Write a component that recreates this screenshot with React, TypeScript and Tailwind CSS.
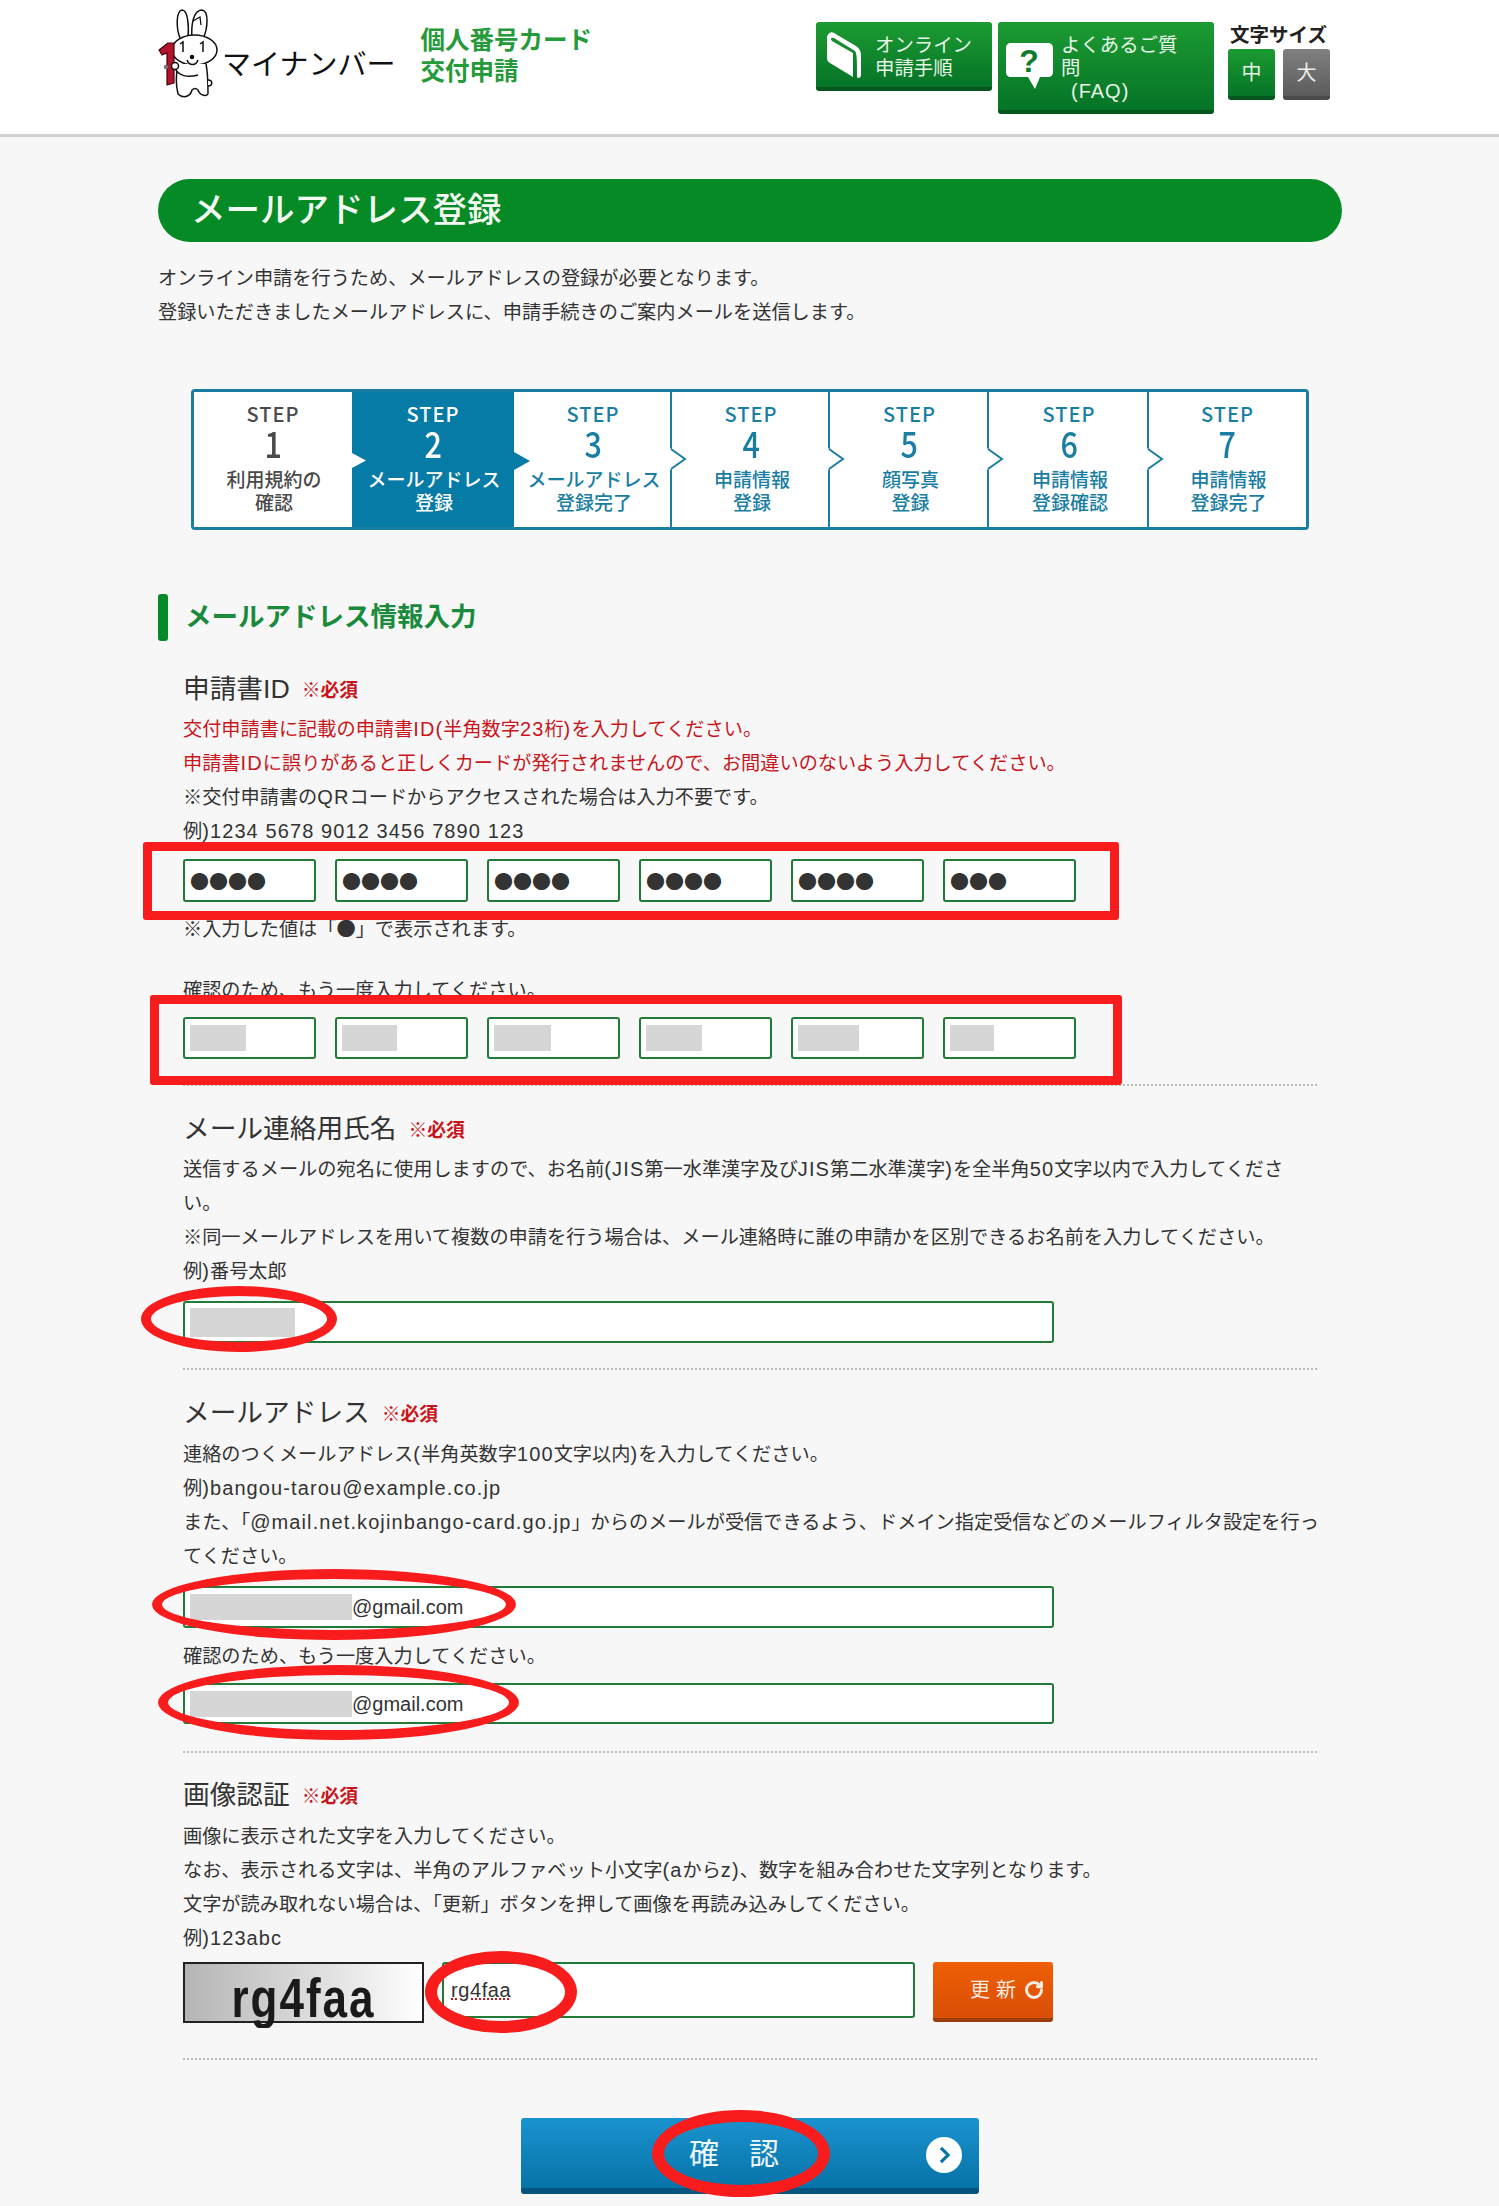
import { RotateCw } from "lucide-react";

const steps = [
  { num: "1", label: ["利用規約の", "確認"], tone: "first" },
  { num: "2", label: ["メールアドレス", "登録"], tone: "active" },
  { num: "3", label: ["メールアドレス", "登録完了"], tone: "next" },
  { num: "4", label: ["申請情報", "登録"], tone: "next" },
  { num: "5", label: ["顔写真", "登録"], tone: "next" },
  { num: "6", label: ["申請情報", "登録確認"], tone: "next" },
  { num: "7", label: ["申請情報", "登録完了"], tone: "next" },
];

function Rabbit() {
  return (
    <svg viewBox="0 0 64 92" className="h-[92px] w-[64px] shrink-0" fill="none" stroke="#111" strokeWidth="1.5">
      <path d="M22 30 C18 20 18 3 24 2 C30 2 31 18 30 30" fill="#fff" />
      <path d="M34 30 C33 18 35 2 44 2 C51 3 50 20 45 31" fill="#fff" />
      <path d="M35 13 L42 9 L43 17" strokeWidth="1.3" />
      <ellipse cx="36.5" cy="42" rx="22.5" ry="15" fill="#fff" />
      <path d="M20 56 C18 66 18 78 20 86 C24 90 32 90 34 82 C36 80 38 80 40 82 C42 88 50 89 50 85 C50 76 50 66 48 56" fill="#fff" />
      <path d="M17 60 C20 68 30 70 40 67" fill="#fff" />
      <path d="M50 72 C55 72 55 78 50 78" fill="#fff" />
      <path d="M22 36 L25 34 V44 M42 36 L45 34 V44" strokeWidth="1.5" />
      <circle cx="34" cy="49" r="1.5" fill="#111" />
      <path d="M29 52 C31 58 38 58 40 52" />
      <path d="M1 42 L10 35 H16 V75 L9 77 V45 L4 47 Z" fill="#b5122b" stroke="#3a0810" strokeWidth="1.2" strokeLinejoin="round" />
      <circle cx="17" cy="58" r="3.5" fill="#fff" />
      <circle cx="8" cy="59" r="2.2" fill="#777" stroke="none" />
    </svg>
  );
}

function BookIcon() {
  return (
    <svg viewBox="0 0 36 48" className="h-[48px] w-[36px]" fill="#fff">
      <path d="M1 7 C1 3 5 0 8 2 L30 15 C33 17 35 20 35 24 V44 C35 47 32 48 31 46 C31 30 31 22 29 20 L8 7 C5 6 4 8 6 10 L27 22 V46 L4 32 C2 31 1 29 1 27 Z" />
    </svg>
  );
}

function BubbleIcon() {
  return (
    <svg viewBox="0 0 47 46" className="h-[46px] w-[47px]">
      <path d="M5 0 H42 C45 0 47 2 47 5 V29 C47 32 45 34 42 34 H34 L29 46 L22 34 H5 C2 34 0 32 0 29 V5 C0 2 2 0 5 0 Z" fill="#fff" />
      <text x="23" y="29" textAnchor="middle" fontSize="32" fontWeight="700" fill="#0a7c2c" fontFamily="Liberation Sans, sans-serif">?</text>
    </svg>
  );
}

function StepCell({ num, label, tone, index }: { num: string; label: string[]; tone: string; index: number }) {
  const bg = tone === "active" ? "bg-[#067ba5]" : "bg-white";
  const color = tone === "active" ? "text-white" : tone === "first" ? "text-[#4a4a4a]" : "text-[#1a7ea3]";

  return (
    <div className={`relative flex h-[135px] flex-col items-center font-['Noto_Sans_CJK_JP',sans-serif] ${bg} ${color}`}>
      <div className="mt-[10px] h-[22px] text-[20px] leading-[24px] font-medium tracking-[1px]">STEP</div>
      <div className="h-[36px] scale-x-[0.85] text-[36px] leading-[36px] font-medium">{num}</div>
      <div className="mt-[7px] pl-[2px] text-[19px] leading-[23px] font-medium text-center whitespace-nowrap">
        {label.map((l) => (
          <div key={l}>{l}</div>
        ))}
      </div>
      {index === 0 && (
        <svg viewBox="0 0 14 15" className="absolute top-[61px] -right-[14px] z-10 h-[15px] w-[14px]">
          <path d="M0 0 L14 7.5 L0 15 Z" fill="#fff" />
        </svg>
      )}
      {index === 1 && (
        <svg viewBox="0 0 16 18" className="absolute top-[60px] -right-[16px] z-10 h-[18px] w-[16px]">
          <path d="M0 0 L16 9 L0 18 Z" fill="#067ba5" />
        </svg>
      )}
      {index >= 2 && index < 6 && (
        <>
          <div className="absolute top-0 right-0 h-full w-[2px] bg-[#1a7ea3]" />
          <svg viewBox="0 0 17 22" className="absolute top-[56px] -right-[15px] z-10 h-[22px] w-[17px]">
            <path d="M0 0 L15 11 L0 22 Z" fill="#fff" />
            <path d="M1 1 L15 11 L1 21" fill="none" stroke="#1a7ea3" strokeWidth="2" />
          </svg>
        </>
      )}
    </div>
  );
}

function FieldLabel({ title, gap }: { title: string; gap: string }) {
  return (
    <div className="flex h-[40px] items-center">
      <span className="text-[26.7px] leading-[40px] text-[#333]">{title}</span>
      <span className={`${gap} mt-[3px] text-[18.8px] leading-[40px] font-bold text-[#c8161d]`}>※必須</span>
    </div>
  );
}

// latin runs sit a little larger and wider than the kana around them
function Line({ children, red }: { children: string; red?: boolean }) {
  const parts = children.split(/([A-Za-z0-9@.\-() ]+)/);

  return (
    <p className={`h-[34px] text-[19.2px] leading-[32px] whitespace-nowrap ${red ? "text-[#c8161d]" : "text-[#333]"}`}>
      {parts.map((part, i) =>
        i % 2 === 1 ? (
          <span key={i} className="text-[20px] tracking-[1.1px]">{part}</span>
        ) : (
          <span key={i} className="font-['Noto_Sans_CJK_JP']">{part}</span>
        ),
      )}
    </p>
  );
}

function IdInputs({ gray, h }: { gray?: boolean; h: string }) {
  const widths = ["w-[56px]", "w-[55px]", "w-[57px]", "w-[56px]", "w-[61px]", "w-[44px]"];
  const dots = ["●●●●", "●●●●", "●●●●", "●●●●", "●●●●", "●●●"];

  return (
    <div className="flex gap-[19px]">
      {widths.map((w, i) => (
        <div key={i} className={`flex w-[133px] items-center rounded-[3px] border-2 border-[#217a38] bg-white pl-[5px] ${h}`}>
          {gray ? (
            <div className={`h-[26px] ${w} bg-[#d6d6d6]`} />
          ) : (
            <span className="font-['Noto_Sans_CJK_JP'] text-[19px] leading-none text-[#333]">{dots[i]}</span>
          )}
        </div>
      ))}
    </div>
  );
}

function Divider({ className }: { className: string }) {
  return <div className={`h-0 w-[1134px] border-b-2 border-dotted border-[#bdbdbd] ${className}`} />;
}

function TextBox({ className, gray, value }: { className: string; gray?: string; value?: string }) {
  return (
    <div className={`flex items-center rounded-[3px] border-2 border-[#217a38] bg-white pl-[5px] ${className}`}>
      {gray && <div className={`${gray} bg-[#d6d6d6]`} />}
      {value && <span className="text-[20px] leading-none text-[#333]">{value}</span>}
    </div>
  );
}

export default function App() {
  return (
    <div className="relative min-h-[2206px] w-[1499px] overflow-hidden bg-[#f7f7f7] font-['Liberation_Sans','Noto_Sans_CJK_JP',sans-serif]">
      <header className="flex h-[137px] border-b-[3px] border-[#d0d0d0] bg-white pl-[158px]">
        <div className="mt-[8px] flex h-[92px]">
          <Rabbit />
          <span className="mt-[38px] text-[29px] leading-[38px] text-[#111]">マイナンバー</span>
        </div>
        <div className="mt-[25px] ml-[25px] text-[24.5px] leading-[31px] font-bold text-[#259a3a]">
          <div>個人番号カード</div>
          <div>交付申請</div>
        </div>
        <div className="ml-auto flex items-start pt-[22px] pr-[169px]">
          <div className="flex h-[69px] w-[176px] rounded-[3px] border-b-[4px] border-[#05561c] bg-gradient-to-b from-[#1c9b32] to-[#057427] pt-[9px] pl-[10px] text-[19.4px] leading-[23px] text-[#e6f5e6]">
            <BookIcon />
            <div className="mt-[3px] ml-[13px]">
              <div>オンライン</div>
              <div>申請手順</div>
            </div>
          </div>
          <div className="ml-[6px] flex h-[92px] w-[216px] rounded-[3px] border-b-[4px] border-[#05561c] bg-gradient-to-b from-[#1c9b32] to-[#057427] pt-[21px] pl-[8px] text-[19.4px] leading-[23px] text-[#e6f5e6]">
            <BubbleIcon />
            <div className="-mt-[9px] ml-[8px]">
              <div>よくあるご質</div>
              <div>問</div>
              <div className="ml-[10px] text-[20px] tracking-[1px]">(FAQ)</div>
            </div>
          </div>
          <div className="ml-[14px] w-[102px]">
            <div className="ml-[2px] h-[27px] text-[19.5px] leading-[26px] font-bold text-[#222]">文字サイズ</div>
            <div className="flex gap-[8px]">
              <div className="flex h-[51px] w-[47px] items-center justify-center rounded-[3px] border-b-[4px] border-[#05561c] bg-gradient-to-b from-[#1c9b32] to-[#057427] text-[20px] text-[#e6f5e6]">中</div>
              <div className="flex h-[51px] w-[47px] items-center justify-center rounded-[3px] border-b-[4px] border-[#4a4a4a] bg-gradient-to-b from-[#808080] to-[#5c5c5c] text-[20px] text-[#eee]">大</div>
            </div>
          </div>
        </div>
      </header>

      <main className="w-[1341px] pl-[158px]">
        <h1 className="mt-[42px] flex h-[63px] w-[1184px] items-center rounded-full bg-[#068a26] pl-[33px] text-[34.5px] font-medium text-[#f2faf2]">
          メールアドレス登録
        </h1>

        <div className="mt-[19px]">
          <Line>オンライン申請を行うため、メールアドレスの登録が必要となります。</Line>
          <Line>登録いただきましたメールアドレスに、申請手続きのご案内メールを送信します。</Line>
        </div>

        <div className="mt-[60px] ml-[33px] grid w-[1118px] grid-cols-[158px_162px_158px_158px_159px_160px_157px] overflow-visible rounded-[4px] border-[3px] border-[#1a7ea3]">
          {steps.map((s, i) => (
            <StepCell key={s.num} num={s.num} label={s.label} tone={s.tone} index={i} />
          ))}
        </div>

        <h2 className="mt-[64px] flex h-[47px] items-center">
          <span className="h-[47px] w-[10px] rounded-[3px] bg-[#068a26]" />
          <span className="ml-[17px] text-[26.5px] font-bold text-[#1a8a3c]">メールアドレス情報入力</span>
        </h2>

        <div className="pl-[25px]">
          <div className="mt-[28px]">
            <FieldLabel title="申請書ID" gap="ml-[12px]" />
          </div>
          <div className="mt-[3px]">
            <Line red>交付申請書に記載の申請書ID(半角数字23桁)を入力してください。</Line>
            <Line red>申請書IDに誤りがあると正しくカードが発行されませんので、お間違いのないよう入力してください。</Line>
            <Line>※交付申請書のQRコードからアクセスされた場合は入力不要です。</Line>
            <Line>例)1234 5678 9012 3456 7890 123</Line>
          </div>
          <div className="mt-[11px]">
            <IdInputs h="h-[43px]" />
          </div>
          <div className="mt-[10px]">
            <Line>※入力した値は「●」で表示されます。</Line>
          </div>
          <div className="mt-[27px]">
            <Line>確認のため、もう一度入力してください。</Line>
          </div>
          <div className="mt-[10px]">
            <IdInputs gray h="h-[42px]" />
          </div>
          <Divider className="mt-[25px]" />

          <div className="mt-[23px]">
            <FieldLabel title="メール連絡用氏名" gap="ml-[12px]" />
          </div>
          <div className="mt-[3px]">
            <Line>送信するメールの宛名に使用しますので、お名前(JIS第一水準漢字及びJIS第二水準漢字)を全半角50文字以内で入力してくださ</Line>
            <Line>い。</Line>
            <Line>※同一メールアドレスを用いて複数の申請を行う場合は、メール連絡時に誰の申請かを区別できるお名前を入力してください。</Line>
            <Line>例)番号太郎</Line>
          </div>
          <TextBox className="mt-[13px] h-[42px] w-[871px]" gray="h-[29px] w-[105px]" />
          <Divider className="mt-[25px]" />

          <div className="mt-[23px]">
            <FieldLabel title="メールアドレス" gap="ml-[12px]" />
          </div>
          <div className="mt-[4px]">
            <Line>連絡のつくメールアドレス(半角英数字100文字以内)を入力してください。</Line>
            <Line>例)bangou-tarou@example.co.jp</Line>
            <Line>また、「@mail.net.kojinbango-card.go.jp」からのメールが受信できるよう、ドメイン指定受信などのメールフィルタ設定を行っ</Line>
            <Line>てください。</Line>
          </div>
          <TextBox className="mt-[13px] h-[42px] w-[871px]" gray="h-[26px] w-[162px]" value="@gmail.com" />
          <div className="mt-[11px]">
            <Line>確認のため、もう一度入力してください。</Line>
          </div>
          <TextBox className="mt-[10px] h-[41px] w-[871px]" gray="h-[26px] w-[162px]" value="@gmail.com" />
          <Divider className="mt-[27px]" />

          <div className="mt-[22px]">
            <FieldLabel title="画像認証" gap="ml-[12px]" />
          </div>
          <div className="mt-[4px]">
            <Line>画像に表示された文字を入力してください。</Line>
            <Line>なお、表示される文字は、半角のアルファベット小文字(aからz)、数字を組み合わせた文字列となります。</Line>
            <Line>文字が読み取れない場合は、「更新」ボタンを押して画像を再読み込みしてください。</Line>
            <Line>例)123abc</Line>
          </div>
          <div className="mt-[7px] flex items-start">
            <div className="flex h-[61px] w-[241px] items-center justify-center border-2 border-[#222] bg-gradient-to-r from-[#b5b5b5] to-white">
              <span className="mt-[10px] scale-y-125 text-[44px] leading-none font-bold tracking-[2px] text-[#1a1a1a] blur-[0.6px]">rg4faa</span>
            </div>
            <div className="ml-[18px] flex h-[56px] w-[473px] items-center rounded-[3px] border-2 border-[#217a38] bg-white pl-[7px]">
              <span className="text-[20px] leading-[24px] tracking-[0.6px] text-[#333] underline decoration-[#c8161d] decoration-dotted">rg4faa</span>
            </div>
            <button type="button" className="ml-[18px] flex h-[60px] w-[120px] items-center justify-end rounded-[3px] border-b-[4px] border-[#9c3f06] bg-gradient-to-b from-[#f05f05] to-[#d84e06] pr-[9px] text-[20px] text-[#f5ece4]">
              <span className="tracking-[6px]">更新</span>
              <RotateCw className="ml-[2px] h-[20px] w-[20px]" strokeWidth={3.5} />
            </button>
          </div>
          <Divider className="mt-[35px]" />
        </div>

        <button type="button" className="relative mt-[58px] ml-[363px] flex h-[76px] w-[458px] items-center rounded-[3px] border-b-[6px] border-[#05557f] bg-gradient-to-b from-[#1a93cf] to-[#0673a8] text-[30px] text-[#eef7fb]">
          <span className="ml-[168px] tracking-[30px]">確認</span>
          <span className="absolute top-[19px] right-[17px] flex h-[36px] w-[36px] items-center justify-center rounded-full bg-white">
            <svg viewBox="0 0 14 20" className="h-[18px] w-[13px]" fill="none" stroke="#0673a8" strokeWidth="3.5">
              <path d="M3 2 L11 10 L3 18" />
            </svg>
          </span>
        </button>
        <div className="h-[12px]" />
      </main>

      <div className="absolute top-[842px] left-[143px] h-[78px] w-[976px] rounded-[3px] border-[9px] border-[#f81c1c]" />
      <div className="absolute top-[995px] left-[150px] h-[90px] w-[972px] rounded-[3px] border-[9px] border-[#f81c1c]" />
      <div className="absolute top-[1286px] left-[141px] h-[66px] w-[196px] rounded-[50%] border-[10px] border-[#f81c1c]" />
      <div className="absolute top-[1569px] left-[152px] h-[71px] w-[364px] rounded-[50%] border-[10px] border-[#f81c1c]" />
      <div className="absolute top-[1665px] left-[158px] h-[75px] w-[361px] rounded-[50%] border-[10px] border-[#f81c1c]" />
      <div className="absolute top-[1951px] left-[425px] h-[82px] w-[152px] rounded-[50%] border-[12px] border-[#f81c1c]" />
      <div className="absolute top-[2110px] left-[652px] h-[87px] w-[178px] rounded-[50%] border-[12px] border-[#f81c1c]" />
    </div>
  );
}
